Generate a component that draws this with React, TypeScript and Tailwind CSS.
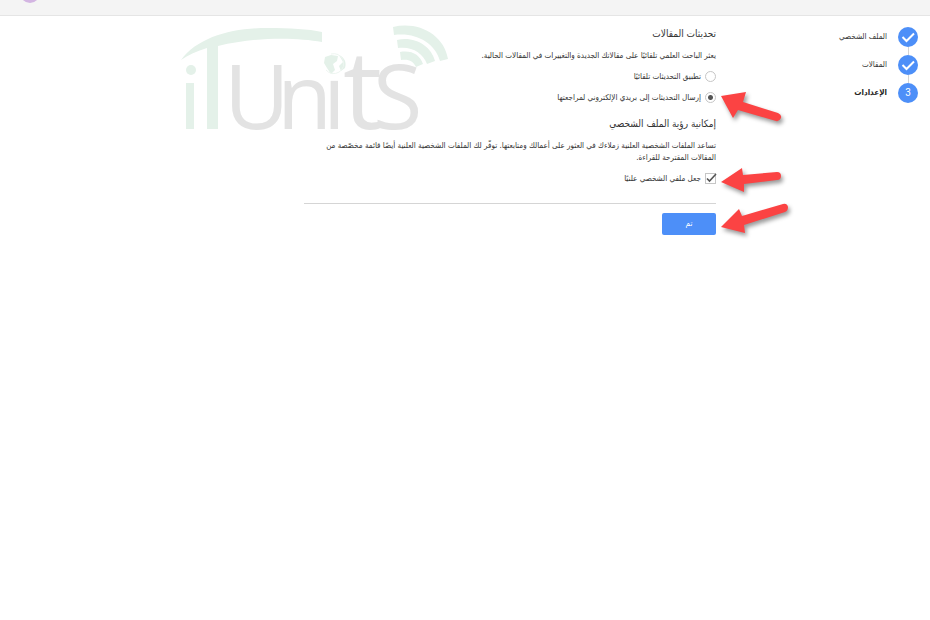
import type { ReactNode } from "react";

type Step = {
    label: string;
    state: "done" | "current";
};

const steps: Step[] = [
    { label: "الملف الشخصي", state: "done" },
    { label: "المقالات", state: "done" },
    { label: "الإعدادات", state: "current" },
];

function Logo() {
    return (
        <svg
            viewBox="0 -5 290 150"
            className="pointer-events-none absolute left-[170px] top-[10px] h-[150px] w-[290px] overflow-visible [direction:ltr]"
            aria-hidden="true"
        >
            <g fill="#e4f1e9">
                <path d="M11 45 C28 22 62 13 98 13 C120 13 138 14 152 17 V27 C125 22 85 22 48 31 V114 H37 V33 C27 36 18 40 11 45 Z" />
                <circle cx="21" cy="55" r="5" />
                <rect x="16" y="68" width="8" height="46" />
                <path d="M223 12 C249 6 274 20 278 44 L270 46 C265 28 246 17 224 20 Z" />
                <path d="M227 25 C245 21 261 31 265 46 L257 49 C253 38 242 31 228 33 Z" />
                <path d="M230 37 C242 35 250 40 253 49 L246 52 C243 46 239 44 231 45 Z" />
                <path d="M155 42 L161 40 L168 41 L167 46 L163 49 L165 55 L161 59 L157 53 L154 48 Z" />
                <path d="M169 40 C174 42 177 47 175 53 L171 56 L169 51 L173 47 Z" />
                <path d="M161 39 A10 10 0 1 1 156 55" fill="none" stroke="#eef6f1" strokeWidth="1" />
            </g>
            <text fill="#e3e3e3" fontFamily='"Open Sans", sans-serif' fontSize="90" y="114">
                <tspan x="54">U</tspan>
                <tspan x="107">n</tspan>
                <tspan x="153">ı</tspan>
                <tspan x="173" fontSize="110">
                    t
                </tspan>
                <tspan x="203">S</tspan>
            </text>
        </svg>
    );
}

function Arrow({ tilt }: { tilt: "down" | "flat" | "up" }) {
    return (
        <svg
            viewBox="0 -36 76 72"
            className="pointer-events-none absolute left-full top-1/2 h-[72px] w-[76px] -translate-y-1/2 drop-shadow-[2px_3px_2px_rgba(0,0,0,0.4)]"
            fill="#fb4343"
            aria-hidden="true"
        >
            {tilt === "down" && (
                <path d="M5 -2 L30 -6 L27 4 L62 15 Q66 17 65 20 Q63 24 60 23 L22 12 L17 20 Z" />
            )}
            {tilt === "flat" && (
                <path d="M5 3 L26 -11 L27 -4 L61 -7 Q65 -7 65 -3 Q65 1 61 1 L28 5 L28 13 Z" />
            )}
            {tilt === "up" && (
                <path d="M5 3 L23 -15 L26 -8 L67 -20 Q71 -21 72 -17 Q72 -13 69 -12 L28 1 L29 9 Z" />
            )}
        </svg>
    );
}

function StepItem({ step, index }: { step: Step; index: number }) {
    return (
        <li>
            {index > 0 && <div className="me-[9px] ms-[9px] h-2 w-px bg-[#d4d4d4]" />}
            <a
                href="#"
                aria-current={step.state === "current" ? "step" : undefined}
                className="flex items-center gap-[11px]"
            >
                <span className="flex size-5 items-center justify-center rounded-full bg-[#4d8ff8] font-[Roboto,sans-serif] text-[10px] text-white">
                    {step.state === "done" ? (
                        <svg viewBox="0 0 20 20" className="size-5" fill="none" aria-hidden="true">
                            <path d="M4.5 10 L8.5 14 L16 6.5" stroke="white" strokeWidth="2" />
                        </svg>
                    ) : (
                        index + 1
                    )}
                </span>
                <span className={step.state === "current" ? "font-bold text-[#222]" : ""}>
                    {step.label}
                </span>
            </a>
        </li>
    );
}

function Option({ id, label, children }: { id: string; label: string; children: ReactNode }) {
    return (
        <div className="relative flex h-[21px] items-center gap-1">
            {children}
            <label htmlFor={id}>{label}</label>
        </div>
    );
}

const radioClass =
    "size-[11px] appearance-none rounded-full border border-[#c6c6c6] bg-white checked:bg-[radial-gradient(circle,#555_0_2px,white_3px)]";

export default function App() {
    return (
        <div
            dir="rtl"
            lang="ar"
            className="relative min-h-screen overflow-hidden bg-white font-['DejaVu_Sans_Condensed','DejaVu_Sans',sans-serif] text-[8px] leading-3 text-[#333]"
        >
            <header className="relative h-4 overflow-hidden border-b border-[#e5e5e5] bg-[#f4f4f4]">
                <div className="absolute bottom-3 left-5 size-5 rounded-full bg-[#d3b5e2]" />
            </header>
            <Logo />

            <div className="relative flex items-start">
                <aside className="w-[214px] shrink-0 pe-3 ps-3 pt-[11px]">
                    <ol>
                        {steps.map((step, i) => (
                            <StepItem key={step.label} step={step} index={i} />
                        ))}
                    </ol>
                </aside>

                <main className="w-full max-w-[412px] pt-[10px]">
                    <form onSubmit={(e) => e.preventDefault()}>
                        <h2 className="text-[10px] leading-4">تحديثات المقالات</h2>
                        <p className="mb-1 mt-2">
                            يعثر الباحث العلمي تلقائيًا على مقالاتك الجديدة والتغييرات في المقالات الحالية.
                        </p>
                        <Option id="auto" label="تطبيق التحديثات تلقائيًا">
                            <input id="auto" type="radio" name="updates" className={radioClass} />
                        </Option>
                        <Option id="email" label="إرسال التحديثات إلى بريدي الإلكتروني لمراجعتها">
                            <input
                                id="email"
                                type="radio"
                                name="updates"
                                defaultChecked
                                className={radioClass}
                            />
                            <Arrow tilt="down" />
                        </Option>

                        <h2 className="mt-2 text-[10px] leading-4">إمكانية رؤية الملف الشخصي</h2>
                        <p className="mb-1 mt-2">
                            تساعد الملفات الشخصية العلنية زملاءك في العثور على أعمالك ومتابعتها. توفّر لك
                            الملفات الشخصية العلنية أيضًا قائمة مخصّصة من المقالات المقترحة للقراءة.
                        </p>
                        <Option id="public" label="جعل ملفي الشخصي علنيًا">
                            <span className="relative flex">
                                <input
                                    id="public"
                                    type="checkbox"
                                    defaultChecked
                                    className="peer size-[11px] appearance-none border border-[#c6c6c6] bg-white"
                                />
                                <svg
                                    viewBox="0 0 11 11"
                                    className="pointer-events-none absolute inset-0 hidden size-[11px] overflow-visible peer-checked:block"
                                    fill="none"
                                    aria-hidden="true"
                                >
                                    <path d="M2 5.5 L4.5 8 L11 1" stroke="#555" strokeWidth="1.6" />
                                </svg>
                            </span>
                            <Arrow tilt="flat" />
                        </Option>

                        <hr className="mb-[9px] mt-[14px] border-[#d5d5d5]" />
                        <div className="relative">
                            <button
                                type="submit"
                                className="block h-[22px] w-[54px] rounded-xs bg-[#4d8ff8] text-white"
                            >
                                تم
                            </button>
                            <Arrow tilt="up" />
                        </div>
                    </form>
                </main>
            </div>
        </div>
    );
}
